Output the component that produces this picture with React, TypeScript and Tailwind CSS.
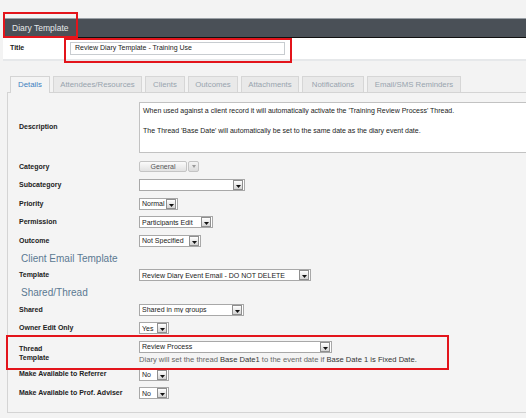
import React from "react";

const tabs = [
  { label: "Details", w: "w-[40px]", active: true },
  { label: "Attendees/Resources", w: "w-[89px]" },
  { label: "Clients", w: "w-[40px]" },
  { label: "Outcomes", w: "w-[50px]" },
  { label: "Attachments", w: "w-[58px]" },
  { label: "Notifications", w: "w-[62px]" },
  { label: "Email/SMS Reminders", w: "w-[94px]" },
];

function Arrow() {
  return (
    <div className="mr-[1px] flex h-[10px] w-[10px] shrink-0 items-end justify-center border border-[#8f8f8f] bg-gradient-to-b from-white to-[#d4d4d4] pb-[1px]">
      <svg width="5" height="3" viewBox="0 0 5 3">
        <path d="M0 0h5L2.5 3z" fill="#111" />
      </svg>
    </div>
  );
}

function Select({ text, w }: { text: string; w: string }) {
  return (
    <div className={`flex h-[12px] items-center border border-[#a8a8a8] bg-white ${w}`}>
      <span className="flex-1 truncate pl-[2px] text-[7px] leading-none text-[#222]">{text}</span>
      <Arrow />
    </div>
  );
}

function Row({ label, children }: { label: string; children?: React.ReactNode }) {
  return (
    <div className="flex h-[18.5px] items-center">
      <div className="w-[120px] shrink-0 text-[7px] font-bold text-[#222]">{label}</div>
      {children}
    </div>
  );
}

function Heading({ text }: { text: string }) {
  return (
    <div className="flex h-[16px] items-center pl-[2px] text-[10px] text-[#5b7992]">{text}</div>
  );
}

export default function App() {
  return (
    <div className="relative h-[418px] w-[526px] overflow-hidden bg-[#f3f3f3] font-['Liberation_Sans',Arial,sans-serif]">
      <div className="h-[18px]" />
      <div className="ml-[3px] flex h-[20px] w-[560px] items-center border-t border-[#9aa0a6] border-b border-b-[#111] bg-[#4a5057] pl-[9px] text-[8.5px] text-[#e6e8ea]">
        Diary Template
      </div>
      <div className="ml-[3px] flex h-[23px] w-[560px] items-center border-b-2 border-[#e6e8ea] bg-white">
        <div className="w-[67px] pl-[7px] text-[7px] font-bold text-[#222]">Title</div>
        <div className="flex h-[13px] w-[215px] items-center border border-[#c8ccd0] bg-white pl-[4px] text-[7px] text-[#222]">
          Review Diary Template - Training Use
        </div>
      </div>

      <div className="mt-[15px] flex gap-[3px] pl-[10px]">
        {tabs.map((t) => (
          <div
            key={t.label}
            className={`flex h-[16px] items-center justify-center border border-b-0 text-[7.8px] ${t.w} ${
              t.active
                ? "relative z-10 -mb-px h-[17px] border-[#d4d4d4] bg-[#f4f4f4] text-[#3d7fbf]"
                : "border-[#d6d6d6] bg-[#e9e9e9] text-[#98a4ae]"
            }`}
          >
            {t.label}
          </div>
        ))}
      </div>

      <div className="ml-[7px] h-[321px] w-[560px] border border-[#d4d4d4] bg-[#f4f4f4] pl-[11px] pt-[9px]">
        <div className="flex items-center">
          <div className="w-[120px] shrink-0 text-[7px] font-bold text-[#222]">Description</div>
          <div className="h-[51px] w-[420px] border border-[#c2c2c2] bg-white pl-[3px] pt-[3px] text-[7px] leading-[10px] text-[#222]">
            <p>When used against a client record it will automatically activate the 'Training Review Process' Thread.</p>
            <p className="mt-[10px]">The Thread 'Base Date' will automatically be set to the same date as the diary event date.</p>
          </div>
        </div>

        <div className="mt-[4.5px]">
          <Row label="Category">
            <div className="flex items-center gap-[1px]">
              <div className="flex h-[11px] w-[48px] items-center justify-center rounded-[2px] border border-[#c4c4c4] bg-gradient-to-b from-[#fbfbfb] to-[#e2e2e2] text-[7px] text-[#555]">
                General
              </div>
              <div className="flex h-[11px] w-[11px] items-center justify-center rounded-[2px] border border-[#c4c4c4] bg-gradient-to-b from-[#f4f4f4] to-[#dcdcdc]">
                <svg width="4" height="3" viewBox="0 0 4 3">
                  <path d="M0 0h4L2 3z" fill="#9a9a9a" />
                </svg>
              </div>
            </div>
          </Row>
          <Row label="Subcategory">
            <Select text="" w="w-[106px]" />
          </Row>
          <Row label="Priority">
            <Select text="Normal" w="w-[39px]" />
          </Row>
          <Row label="Permission">
            <Select text="Participants Edit" w="w-[74px]" />
          </Row>
          <Row label="Outcome">
            <Select text="Not Specified" w="w-[62px]" />
          </Row>
          <Heading text="Client Email Template" />
          <Row label="Template">
            <Select text="Review Diary Event Email - DO NOT DELETE" w="w-[172px]" />
          </Row>
          <Heading text="Shared/Thread" />
          <Row label="Shared">
            <Select text="Shared in my groups" w="w-[105px]" />
          </Row>
          <Row label="Owner Edit Only">
            <Select text="Yes" w="w-[30px]" />
          </Row>
          <div className="flex h-[27.75px] items-start pt-[3px]">
            <div className="w-[120px] shrink-0 pt-[3px] text-[7px] font-bold leading-[9.5px] text-[#222]">
              Thread
              <br />
              Template
            </div>
            <div>
              <Select text="Review Process" w="w-[193px]" />
              <div className="mt-[1px] whitespace-nowrap text-[7.6px] text-[#666]">
                Diary will set the thread <span className="text-[#333]">Base Date1</span> to the event date if{" "}
                <span className="text-[#333]">Base Date 1 is Fixed Date.</span>
              </div>
            </div>
          </div>
          <Row label="Make Available to Referrer">
            <Select text="No" w="w-[30px]" />
          </Row>
          <Row label="Make Available to Prof. Adviser">
            <Select text="No" w="w-[30px]" />
          </Row>
        </div>
      </div>

      <div className="pointer-events-none absolute left-[3px] top-[12px] h-[26px] w-[75px] border-2 border-[#e3141b]" />
      <div className="pointer-events-none absolute left-[64px] top-[38px] h-[25px] w-[228px] border-2 border-[#e3141b]" />
      <div className="pointer-events-none absolute left-[6px] top-[335px] h-[35px] w-[443px] border-2 border-[#e3141b]" />
    </div>
  );
}
